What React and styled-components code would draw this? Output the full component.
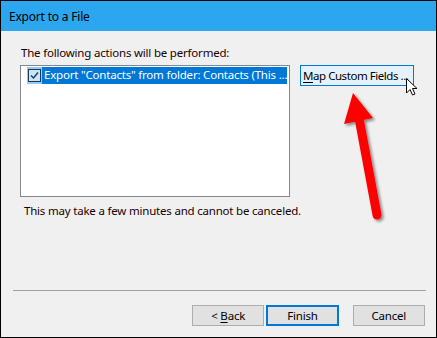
import styled, { createGlobalStyle } from "styled-components";

const GlobalStyle = createGlobalStyle`
  *, *::before, *::after {
    box-sizing: border-box;
  }
  html, body {
    margin: 0;
    padding: 0;
    background: #000;
  }
  body {
    font-family: "Noto Sans", "Open Sans", sans-serif;
    font-size: 11.5px;
    letter-spacing: -0.2px;
  }
`;

const Window = styled.div`
  width: 437px;
  height: 338px;
  border: 1px solid #000;
  background: #f0f0f0;
  display: flex;
  flex-direction: column;
  position: relative;
  overflow: hidden;
`;

const TitleBar = styled.div`
  height: 30px;
  flex-shrink: 0;
  background: #2ba6ef;
  color: #000;
  display: flex;
  align-items: center;
  padding-left: 8px;
  font-size: 12px;
`;

const Body = styled.div`
  flex: 1;
  display: flex;
  flex-direction: column;
  padding: 13px 11px 0 19px;
  color: #1a0000;
`;

const Label = styled.div`
  height: 18px;
  line-height: 18px;
  padding-left: 1px;
`;

const Middle = styled.div`
  display: flex;
  align-items: flex-start;
  gap: 10px;
  margin-top: 3px;
`;

const ListBox = styled.div`
  width: 270px;
  height: 132px;
  border: 1px solid #828790;
  background: #fff;
  padding: 1px 2px 0 6px;
`;

const Row = styled.div`
  display: flex;
  align-items: center;
  height: 17px;
`;

const CheckCell = styled.div`
  width: 15px;
  height: 17px;
  background: #99c9ef;
  display: flex;
  align-items: center;
  justify-content: center;
`;

const Check = styled.div`
  width: 13px;
  height: 13px;
  border: 1px solid #1b3a5a;
  background: #cce4f7;
  display: flex;
  align-items: center;
  justify-content: center;
`;

const RowText = styled.div`
  flex: 1;
  height: 17px;
  line-height: 16px;
  background: #0078d7;
  color: #fff;
  padding-left: 2px;
  white-space: nowrap;
  overflow: hidden;
`;

const Button = styled.button`
  font-family: inherit;
  font-size: 11.5px;
  letter-spacing: ${(p) => (p.$tight ? "-0.45px" : "-0.2px")};
  color: #000;
  white-space: nowrap;
  height: ${(p) => p.$h || 21}px;
  width: ${(p) => p.$w || 73}px;
  padding: 0;
  background: ${(p) => (p.$hover ? "#e5f1fb" : "#e1e1e1")};
  border: ${(p) => (p.$primary ? "2px solid #0078d7" : p.$hover ? "1px solid #0078d7" : "1px solid #adadad")};
  display: flex;
  align-items: center;
  justify-content: ${(p) => (p.$left ? "flex-start" : "center")};
  padding-left: ${(p) => (p.$left ? "2px" : "0")};
  overflow: hidden;

  u {
    text-decoration: underline;
    text-underline-offset: 2px;
  }
`;

const Note = styled.div`
  margin-top: 6px;
  padding-left: 4px;
  height: 16px;
  line-height: 16px;
`;

const Separator = styled.div`
  margin: 71px 0 0 -7px;
  height: 1px;
  background: #a0a0a0;
  width: 413px;
`;

const Footer = styled.div`
  display: flex;
  margin-top: 14px;
  padding-left: 172px;
  gap: 2px;
`;

const Spacer = styled.div`
  width: 10px;
`;

const Overlay = styled.svg`
  position: absolute;
  left: -1px;
  top: -1px;
  pointer-events: none;
`;

export default function App() {
  return (
    <>
      <GlobalStyle />
      <Window>
        <TitleBar>Export to a File</TitleBar>
        <Body>
          <Label>The following actions will be performed:</Label>
          <Middle>
            <ListBox>
              <Row>
                <CheckCell>
                  <Check>
                    <svg width="9" height="9" viewBox="0 0 9 9">
                      <path d="M1 4.5 L3.5 7 L8 1.5" fill="none" stroke="#1b3a5a" strokeWidth="1.4" />
                    </svg>
                  </Check>
                </CheckCell>
                <RowText>Export "Contacts" from folder: Contacts (This ...</RowText>
              </Row>
            </ListBox>
            <Button $hover $left $tight $w={114} $h={21}>
              <span>
                <u>M</u>ap Custom Fields ...
              </span>
            </Button>
          </Middle>
          <Note>This may take a few minutes and cannot be canceled.</Note>
          <Separator />
          <Footer>
            <Button>
              <span>
                &lt; <u>B</u>ack
              </span>
            </Button>
            <Button $primary>Finish</Button>
            <Spacer />
            <Button>Cancel</Button>
          </Footer>
        </Body>
        <Overlay width="437" height="338" viewBox="0 0 437 338">
          <defs>
            <filter id="sh" x="-50%" y="-50%" width="200%" height="200%">
              <feDropShadow dx="2" dy="2" stdDeviation="1.5" floodColor="#000" floodOpacity="0.45" />
            </filter>
          </defs>
          <g filter="url(#sh)">
            <line x1="377" y1="215" x2="359" y2="118" stroke="#ff0000" strokeWidth="9" strokeLinecap="round" />
            <polygon points="353,93 373,118 344,124" fill="#ff0000" />
          </g>
          <g transform="translate(406,78)">
            <path
              d="M0.5 0.5 L0.5 15 L4 11.5 L6.5 17 L9 16 L6.5 10.5 L11 10.5 Z"
              fill="#fff"
              stroke="#000"
              strokeWidth="1"
              strokeLinejoin="miter"
            />
          </g>
        </Overlay>
      </Window>
    </>
  );
}
